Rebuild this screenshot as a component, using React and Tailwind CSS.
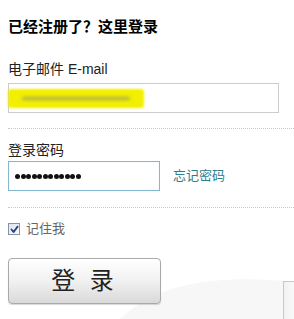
import React from 'react';

const cjk = { fontFamily: '"Liberation Sans", "Noto Sans CJK SC", sans-serif' };

function Checkbox() {
    return (
        <span className="w-[12px] h-[12px] border border-[#8694a8] bg-gradient-to-br from-[#dfe4ec] to-[#f8f9fb] flex items-center justify-center">
            <svg width="9" height="9" viewBox="0 0 9 9">
                <path d="M1.5 4.5 L3.6 7 L7.6 1.6" fill="none" stroke="#2b3c86" strokeWidth="1.8" strokeLinecap="round" strokeLinejoin="round" />
            </svg>
        </span>
    );
}

export default function App() {
    const dots = Array.from({ length: 12 });

    return (
        <div className="relative w-[294px] h-[319px] bg-white overflow-hidden pl-2 text-[#222]" style={cjk}>
            {/* faint background shapes */}
            <svg className="absolute left-0 top-[250px] pointer-events-none" width="294" height="69" viewBox="0 0 294 69">
                <path d="M120 69 C150 40 200 22 294 32 L294 69 Z" fill="#f7f7f7" />
            </svg>
            <div className="absolute left-[283px] top-[281px] w-[20px] h-[40px] border-l border-t border-[#c9c9c9] bg-gradient-to-r from-[#f2f2f2] to-white" />

            <div className="relative">
                <h2 className="mt-[17px] text-[15px] leading-[20px] font-bold text-black">已经注册了？这里登录</h2>

                <div className="mt-[22px] text-[14px] leading-[20px]">电子邮件 E-mail</div>
                <div className="mt-[4px] w-[271px] h-[30px] border border-[#cccccc] bg-white flex items-center">
                    <div className="ml-[-1px] w-[136px] h-[19px] rounded-[3px] bg-[#f2f000] blur-[0.8px] flex items-center px-[14px]">
                        <div className="w-full h-[3px] bg-[#a8a850] blur-[1.5px] rounded" />
                    </div>
                </div>

                <div className="mt-[15px] border-t border-dotted border-[#c8c8c8]" />

                <div className="mt-[11px] text-[14px] leading-[20px]">登录密码</div>
                <div className="mt-[1px] flex items-center">
                    <div className="w-[152px] h-[30px] border border-[#86b9d1] shadow-[inset_0_0_1px_#b9d8e6] bg-white flex items-center pl-[6px] gap-[0.5px]">
                        {dots.map((_, i) => (
                            <span key={i} className="w-[5px] h-[5px] rounded-full bg-[#111]" />
                        ))}
                    </div>
                    <span className="ml-[13px] text-[13px] text-[#2f7c8a]">忘记密码</span>
                </div>

                <div className="mt-[16px] border-t border-dotted border-[#c8c8c8]" />

                <label className="mt-[13px] flex items-center gap-[6px] text-[13px] leading-[16px] text-[#666]">
                    <Checkbox />
                    <span>记住我</span>
                </label>

                <button className="mt-[21px] w-[153px] h-[46px] rounded-[4px] border border-[#a9a9a9] bg-gradient-to-b from-white via-[#f1f1f1] to-[#d9d9d9] shadow-[0_1px_1px_rgba(0,0,0,0.15)] flex items-center justify-center text-[24px] text-[#222] tracking-[4px]">
                    登 录
                </button>
            </div>
        </div>
    );
}
